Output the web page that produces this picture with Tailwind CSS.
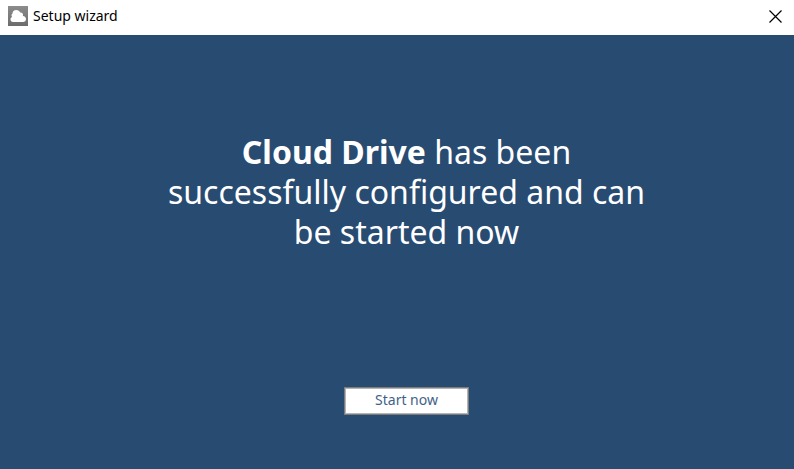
<!DOCTYPE html>
<html lang="en">
<head>
    <meta charset="UTF-8">
    <meta name="viewport" content="width=device-width, initial-scale=1.0">
    <title>Setup wizard</title>
    <script src="https://cdn.jsdelivr.net/npm/@tailwindcss/browser@4"></script>
</head>
<body class="min-h-screen flex flex-col bg-[#284b72] font-['Noto_Sans',sans-serif]">

    <!-- Title bar -->
    <header class="h-[35px] pl-2 pr-3 pb-[3px] flex items-center justify-between bg-white text-black">
        <div class="flex items-center gap-[5px]">
            <svg class="w-5 h-5" viewBox="0 0 20 20" aria-hidden="true">
                <defs>
                    <linearGradient id="tile" x1="0" y1="0" x2="0" y2="1">
                        <stop offset="0" stop-color="#8c8c8c"/>
                        <stop offset="1" stop-color="#6c6c6c"/>
                    </linearGradient>
                </defs>
                <rect width="20" height="20" fill="url(#tile)"/>
                <path d="M5 16C3.500 16 2.500 15 2.500 13.500C2.500 12.200 3.200 11.300 4.300 11C3.200 10 3.200 8.300 4.500 7.500C4.500 5.500 6 4 8.200 4C10.200 4 11.600 5 12.200 6.600C14.200 6.300 15.500 8 14.900 9.900C16.800 10 18 11.300 18 13C18 14.800 16.800 16 15 16Z" fill="#fff"/>
            </svg>
            <h1 class="text-sm">Setup wizard</h1>
        </div>
        <button type="button" aria-label="Close" class="w-[13px] h-[13px]">
            <svg class="w-full h-full" viewBox="0 0 13 13" fill="none" stroke="#000" stroke-width="1.200">
                <path d="M.5 .5l12 12M12.500 .5l-12 12"/>
            </svg>
        </button>
    </header>

    <!-- Finished message -->
    <main class="grow flex flex-col items-center justify-between pt-[97px] pb-[54px] pl-[19px]">
        <p class="max-w-[500px] text-center text-white text-[32px] leading-10">
            <strong class="font-bold">Cloud Drive</strong> has been successfully configured and can be started now
        </p>
        <button type="button" class="w-[125px] h-7 pb-[2px] border border-[#7c7c7c] inset-ring inset-ring-[#b4b4b4] bg-white text-sm text-[#3f6287]">Start now</button>
    </main>

</body>
</html>
